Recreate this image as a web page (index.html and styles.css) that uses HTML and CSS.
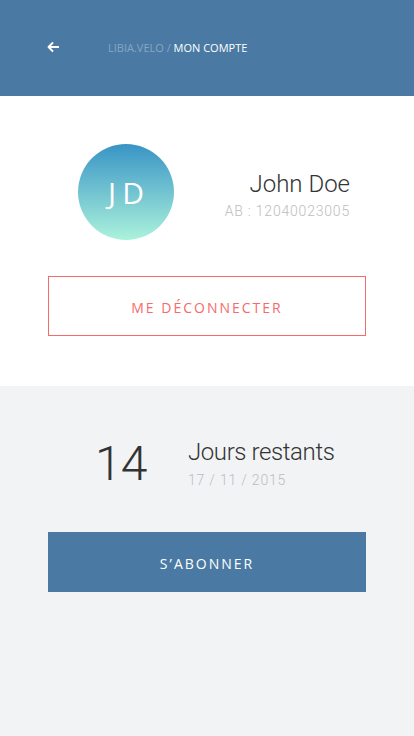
FILE: index.html
```html
<!DOCTYPE html>
<html lang="fr">
<head>
<meta charset="utf-8">
<link rel="stylesheet" href="styles.css">
</head>
<body>
<header class="topbar">
  <svg class="back" width="12" height="10" viewBox="0 0 12 10"><path d="M5.5 1 L1.5 5 L5.5 9 M1.5 5 H11.5" fill="none" stroke="#fff" stroke-width="1.8" stroke-linecap="round" stroke-linejoin="round"/></svg>
  <div class="crumb"><span class="brand">LIBIA.VELO /</span> MON COMPTE</div>
</header>
<section class="profile">
  <div class="identity">
    <div class="avatar">JD</div>
    <div class="names">
      <div class="name">John Doe</div>
      <div class="ab">AB : 12040023005</div>
    </div>
  </div>
  <button class="btn-outline">ME DÉCONNECTER</button>
</section>
<section class="sub">
  <div class="days">
    <div class="count">14</div>
    <div class="days-info">
      <div class="days-label">Jours restants</div>
      <div class="date">17 / 11 / 2015</div>
    </div>
  </div>
  <button class="btn-fill">S’ABONNER</button>
</section>
</body>
</html>
```
FILE: styles.css
```css
html, body { margin: 0; padding: 0; }
body {
  width: 414px;
  height: 736px;
  background: #f2f3f5;
  font-family: Roboto, "Liberation Sans", Arial, sans-serif;
  overflow: hidden;
}
.topbar {
  height: 96px;
  background: #4a7aa3;
  display: flex;
  align-items: center;
  padding: 0 0 1px 47px;
  box-sizing: border-box;
}
.back { display: block; margin-top: -1px; }
.crumb {
  margin-left: 49px;
  font-family: "Open Sans", sans-serif;
  font-size: 11px;
  color: #fff;
  margin-top: -1px;
}
.brand { color: #87a6c4; }
.profile {
  background: #fff;
  height: 290px;
  padding: 48px 48px 0;
  box-sizing: border-box;
}
.identity {
  display: flex;
  align-items: center;
  justify-content: space-between;
  padding: 0 16px 0 30px;
}
.avatar {
  width: 96px;
  height: 96px;
  border-radius: 50%;
  background: linear-gradient(to bottom, #3994c5, #abf2dc);
  color: #fff;
  display: flex;
  align-items: center;
  justify-content: center;
  font-family: "Open Sans", sans-serif;
  font-size: 30px;
  letter-spacing: 6px;
  text-indent: 6px;
}
.names { text-align: right; margin-top: 4px; }
.name {
  font-weight: 300;
  font-size: 24px;
  color: #333;
  line-height: 28px;
}
.ab {
  font-weight: 300;
  font-size: 14px;
  color: #bdbdbd;
  margin-top: 5px;
  letter-spacing: 0.8px;
}
.btn-outline, .btn-fill {
  display: block;
  width: 318px;
  height: 60px;
  box-sizing: border-box;
  font-family: "Open Sans", sans-serif;
  font-weight: 400;
  font-size: 14px;
  letter-spacing: 2px;
  cursor: pointer;
  padding-top: 3px;
}
.btn-outline {
  margin-top: 36px;
  border: 1px solid #f56b6b;
  background: #fff;
  color: #f56b6b;
}
.sub {
  padding: 52px 48px 0;
}
.days {
  display: flex;
  align-items: flex-start;
  padding-left: 47px;
}
.count {
  font-weight: 300;
  font-size: 48px;
  color: #333;
  line-height: 48px;
  margin-top: 2px;
  width: 93px;
  letter-spacing: -1px;
}
.days-label {
  font-weight: 300;
  font-size: 24px;
  color: #333;
  line-height: 28px;
  letter-spacing: -0.4px;
}
.date {
  font-weight: 300;
  font-size: 14px;
  color: #bdbdbd;
  margin-top: 6px;
  letter-spacing: 0.8px;
}
.btn-fill {
  margin-top: 44px;
  border: none;
  background: #4a7aa3;
  color: #fff;
}
```
